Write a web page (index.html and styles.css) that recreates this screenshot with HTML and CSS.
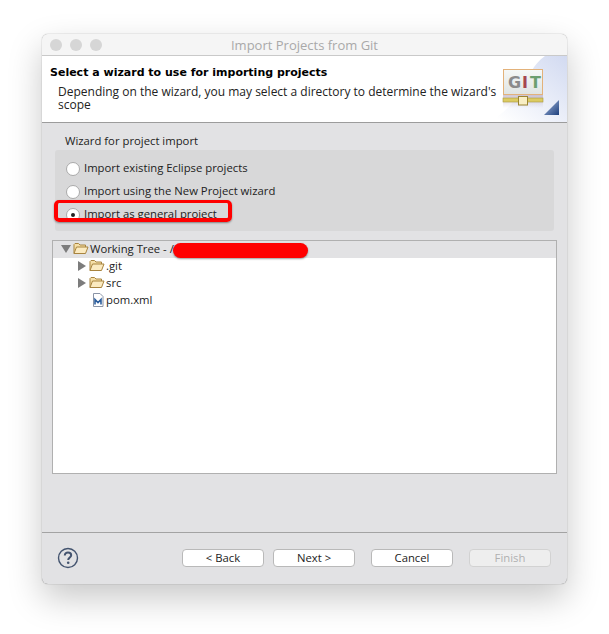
FILE: index.html
```html
<!DOCTYPE html>
<html lang="en">
<head>
  <meta charset="UTF-8">
  <meta name="viewport" content="width=device-width, initial-scale=1.0">
  <title>Import Projects from Git</title>
  <link rel="stylesheet" href="styles.css">
</head>
<body>

<div class="window">
  <!-- Title bar -->
  <div class="titlebar">
    <div class="lights"><span></span><span></span><span></span></div>
    <div class="title">Import Projects from Git</div>
  </div>

  <!-- Wizard banner -->
  <div class="banner">
    <div class="banner-text">
      <h1>Select a wizard to use for importing projects</h1>
      <p>Depending on the wizard, you may select a directory to determine the wizard's scope</p>
    </div>
    <svg class="banner-art" width="96" height="66" viewBox="0 0 96 66">
      <defs>
        <linearGradient id="wash" x1="0" y1="1" x2="1" y2="0">
          <stop offset="0.1" stop-color="#ffffff"/>
          <stop offset="1" stop-color="#d2daf1"/>
        </linearGradient>
        <linearGradient id="tri" x1="0" y1="0" x2="1" y2="1">
          <stop offset="0" stop-color="#a9bde2"/>
          <stop offset="1" stop-color="#1d3f7c"/>
        </linearGradient>
        <linearGradient id="plate" x1="0" y1="0" x2="0" y2="1">
          <stop offset="0" stop-color="#f6f8f7"/>
          <stop offset="1" stop-color="#dfe4e3"/>
        </linearGradient>
        <linearGradient id="shade" x1="0" y1="0" x2="0" y2="1">
          <stop offset="0" stop-color="#b9a9bd" stop-opacity="0.7"/>
          <stop offset="1" stop-color="#b9a9bd" stop-opacity="0"/>
        </linearGradient>
      </defs>
      <path d="M14 66C40 58 50 34 60 16C64 9 68 4 74 0H96V66Z" fill="url(#wash)"/>
      <rect x="32" y="38" width="40" height="14" fill="url(#shade)"/>
      <rect x="32.5" y="13.5" width="39" height="25" fill="url(#plate)" stroke="#e3b27a"/>
      <text x="37" y="32" class="git-letter" fill="#8b8b8b">G</text>
      <text x="51" y="32" class="git-letter" fill="#a5474f">I</text>
      <text x="59" y="32" class="git-letter" fill="#6c9f70">T</text>
      <rect x="32" y="42" width="40" height="4" fill="#dccb62" stroke="#a8983c" stroke-width="0.6"/>
      <rect x="47.5" y="40.5" width="9" height="8.5" fill="#f8eec4" stroke="#9a8430"/>
      <path d="M88 44V59H73Z" fill="url(#tri)"/>
    </svg>
  </div>

  <div class="content">
    <div class="group-title">Wizard for project import</div>
    <div class="group-box">
      <label class="radio"><span class="dot"></span>Import existing Eclipse projects</label>
      <label class="radio"><span class="dot"></span>Import using the New Project wizard</label>
      <label class="radio"><span class="dot checked"></span>Import as general project</label>
      <div class="mark-box"></div>
    </div>

    <!-- Project tree -->
    <div class="tree">
      <div class="row root">
        <span class="arrow open"></span>
        <svg class="folder" width="16" height="13" viewBox="0 0 16 13"><path d="M1 11.5V2.5L2 1.5H5.5L7 3H12.5V5" fill="#f5dfa8" stroke="#a8843f"/><path d="M1 11.5L3.5 5H15L12.5 11.5Z" fill="#fbeac0" stroke="#a8843f"/></svg>
        <span>Working Tree - /</span>
        <div class="redact"></div>
      </div>
      <div class="row child">
        <span class="arrow"></span>
        <svg class="folder" width="16" height="13" viewBox="0 0 16 13"><path d="M1 11.5V2.5L2 1.5H5.5L7 3H12.5V5" fill="#f5dfa8" stroke="#a8843f"/><path d="M1 11.5L3.5 5H15L12.5 11.5Z" fill="#fbeac0" stroke="#a8843f"/></svg>
        <span>.git</span>
      </div>
      <div class="row child">
        <span class="arrow"></span>
        <svg class="folder" width="16" height="13" viewBox="0 0 16 13"><path d="M1 11.5V2.5L2 1.5H5.5L7 3H12.5V5" fill="#f5dfa8" stroke="#a8843f"/><path d="M1 11.5L3.5 5H15L12.5 11.5Z" fill="#fbeac0" stroke="#a8843f"/></svg>
        <span>src</span>
      </div>
      <div class="row leaf">
        <svg class="file" width="12" height="14" viewBox="0 0 12 14"><path d="M1.5 .5H8L11 3.5V13.5H1.5Z" fill="#fff" stroke="#8a94a6"/><path d="M3 11.5V6.5L6 9.5L9 6.5V11.5" fill="none" stroke="#2d5f9e" stroke-width="1.6"/></svg>
        <span>pom.xml</span>
      </div>
    </div>
  </div>

  <!-- Button bar -->
  <div class="footer">
    <svg class="help" width="22" height="22" viewBox="0 0 22 22"><circle cx="11" cy="11" r="9.5" fill="none" stroke="#44546f" stroke-width="1.4"/><path d="M7.8 8.6C7.8 6.6 9.2 5.6 11 5.6C12.9 5.6 14.2 6.7 14.2 8.3C14.2 10.4 11.2 10.6 11.2 13" fill="none" stroke="#44546f" stroke-width="2"/><circle cx="11.2" cy="15.8" r="1.3" fill="#44546f"/></svg>
    <div class="buttons">
      <button>&lt; Back</button>
      <button>Next &gt;</button>
      <button class="spaced">Cancel</button>
      <button class="spaced finish" disabled>Finish</button>
    </div>
  </div>
</div>

</body>
</html>
```

FILE: styles.css
```css
html, body {
  height: 100%;
}
body {
  margin: 0;
  padding: 34px 0 0 42px;
  box-sizing: border-box;
  background-color: #fff;
  font-family: "Open Sans", "DejaVu Sans", sans-serif;
  font-size: 11.3px;
  color: #222;
  overflow: hidden;
}
.window {
  width: 525px;
  height: 550px;
  display: flex;
  flex-direction: column;
  box-sizing: border-box;
  background-color: #e2e2e4;
  border-radius: 6px;
  box-shadow: 0 0 1px rgba(0, 0, 0, 0.55), 0 14px 34px rgba(0, 0, 0, 0.22);
  overflow: hidden;
}
/* Title bar */
.titlebar {
  height: 22px;
  flex: none;
  box-sizing: border-box;
  position: relative;
  display: flex;
  align-items: center;
  justify-content: center;
  background-color: #f5f5f5;
  border-bottom: 1px solid #c9c9c9;
}
.lights {
  position: absolute;
  left: 8px;
  top: 5px;
  display: flex;
  gap: 8px;
}
.lights span {
  width: 12px;
  height: 12px;
  border-radius: 50%;
  background-color: #d6d6d6;
}
.title {
  font-size: 13px;
  color: #a9a9a9;
}
/* Banner */
.banner {
  height: 66px;
  flex: none;
  position: relative;
  display: flex;
  background-color: #fff;
  border-bottom: 1px solid #9c9c9c;
}
.banner-text {
  padding: 10px 0 0 8px;
  width: 450px;
}
.banner h1 {
  margin: 0 0 5px;
  font-family: "DejaVu Sans", sans-serif;
  font-size: 11px;
  line-height: 14px;
  color: #000;
}
.banner p {
  margin: 0 0 0 8px;
  font-size: 12px;
  line-height: 13px;
  color: #222;
}
.banner-art {
  position: absolute;
  right: 0;
  top: 0;
}
.git-letter {
  font-family: "DejaVu Sans", sans-serif;
  font-size: 16px;
  font-weight: bold;
}
/* Content */
.content {
  flex: 1;
  padding: 10px 10px 0;
}
.group-title {
  padding-left: 13px;
  line-height: 15px;
}
.group-box {
  position: relative;
  margin: 2px 3px 0;
  height: 81px;
  padding: 6px 0 0 11px;
  box-sizing: border-box;
  background-color: #d8d8d9;
  border-radius: 3px;
}
.radio {
  height: 23px;
  display: flex;
  align-items: center;
  gap: 4px;
}
.dot {
  width: 14px;
  height: 14px;
  margin-top: 2px;
  box-sizing: border-box;
  display: flex;
  align-items: center;
  justify-content: center;
  background-color: #fff;
  border: 1px solid #aaa;
  border-radius: 50%;
}
.dot.checked::after {
  content: "";
  width: 4px;
  height: 4px;
  background-color: #222;
  border-radius: 50%;
}
.mark-box {
  position: absolute;
  left: -1px;
  top: 50px;
  width: 178px;
  height: 22px;
  box-sizing: border-box;
  border: 4px solid #f00;
  border-top-width: 3px;
  border-radius: 5px;
  box-shadow: 0 1px 2px rgba(0, 0, 0, 0.4);
}
/* Tree */
.tree {
  height: 234px;
  margin-top: 9px;
  box-sizing: border-box;
  background-color: #fff;
  border: 1px solid #b0b0b0;
}
.row {
  position: relative;
  height: 17px;
  box-sizing: border-box;
  padding-bottom: 2px;
  display: flex;
  align-items: center;
}
.row.root {
  padding-left: 8px;
  background-color: #e2e2e4;
}
.row.child {
  padding-left: 25px;
}
.row.leaf {
  padding-left: 39px;
}
.folder {
  margin-right: 1px;
}
.file {
  margin-right: 2px;
}
.arrow {
  width: 0;
  height: 0;
  margin-right: 3px;
  border-top: 5px solid transparent;
  border-bottom: 5px solid transparent;
  border-left: 8px solid #7c7c7c;
}
.arrow.open {
  margin-right: 2px;
  border-left: 5px solid transparent;
  border-right: 5px solid transparent;
  border-top: 8px solid #7c7c7c;
  border-bottom: none;
}
.redact {
  position: absolute;
  left: 120px;
  top: 2px;
  width: 135px;
  height: 15px;
  background-color: #f00;
  border-radius: 8px;
  box-shadow: 0 1px 2px rgba(0, 0, 0, 0.4);
}
/* Footer */
.footer {
  height: 52px;
  flex: none;
  display: flex;
  align-items: center;
  box-sizing: border-box;
  padding: 0 16px 2px 15px;
  border-top: 1px solid #a3a3a3;
}
.buttons {
  margin-left: auto;
  display: flex;
  gap: 9px;
}
.footer button {
  width: 82px;
  height: 18px;
  padding: 0;
  font-family: inherit;
  font-size: 11.3px;
  color: #222;
  background-color: #fff;
  border: 1px solid #b9b9b9;
  border-radius: 4px;
}
.footer button.spaced {
  margin-left: 7px;
}
.footer button.finish {
  color: #b0b0b0;
  background-color: #eeeeee;
  border-color: #d2d2d2;
}
```
